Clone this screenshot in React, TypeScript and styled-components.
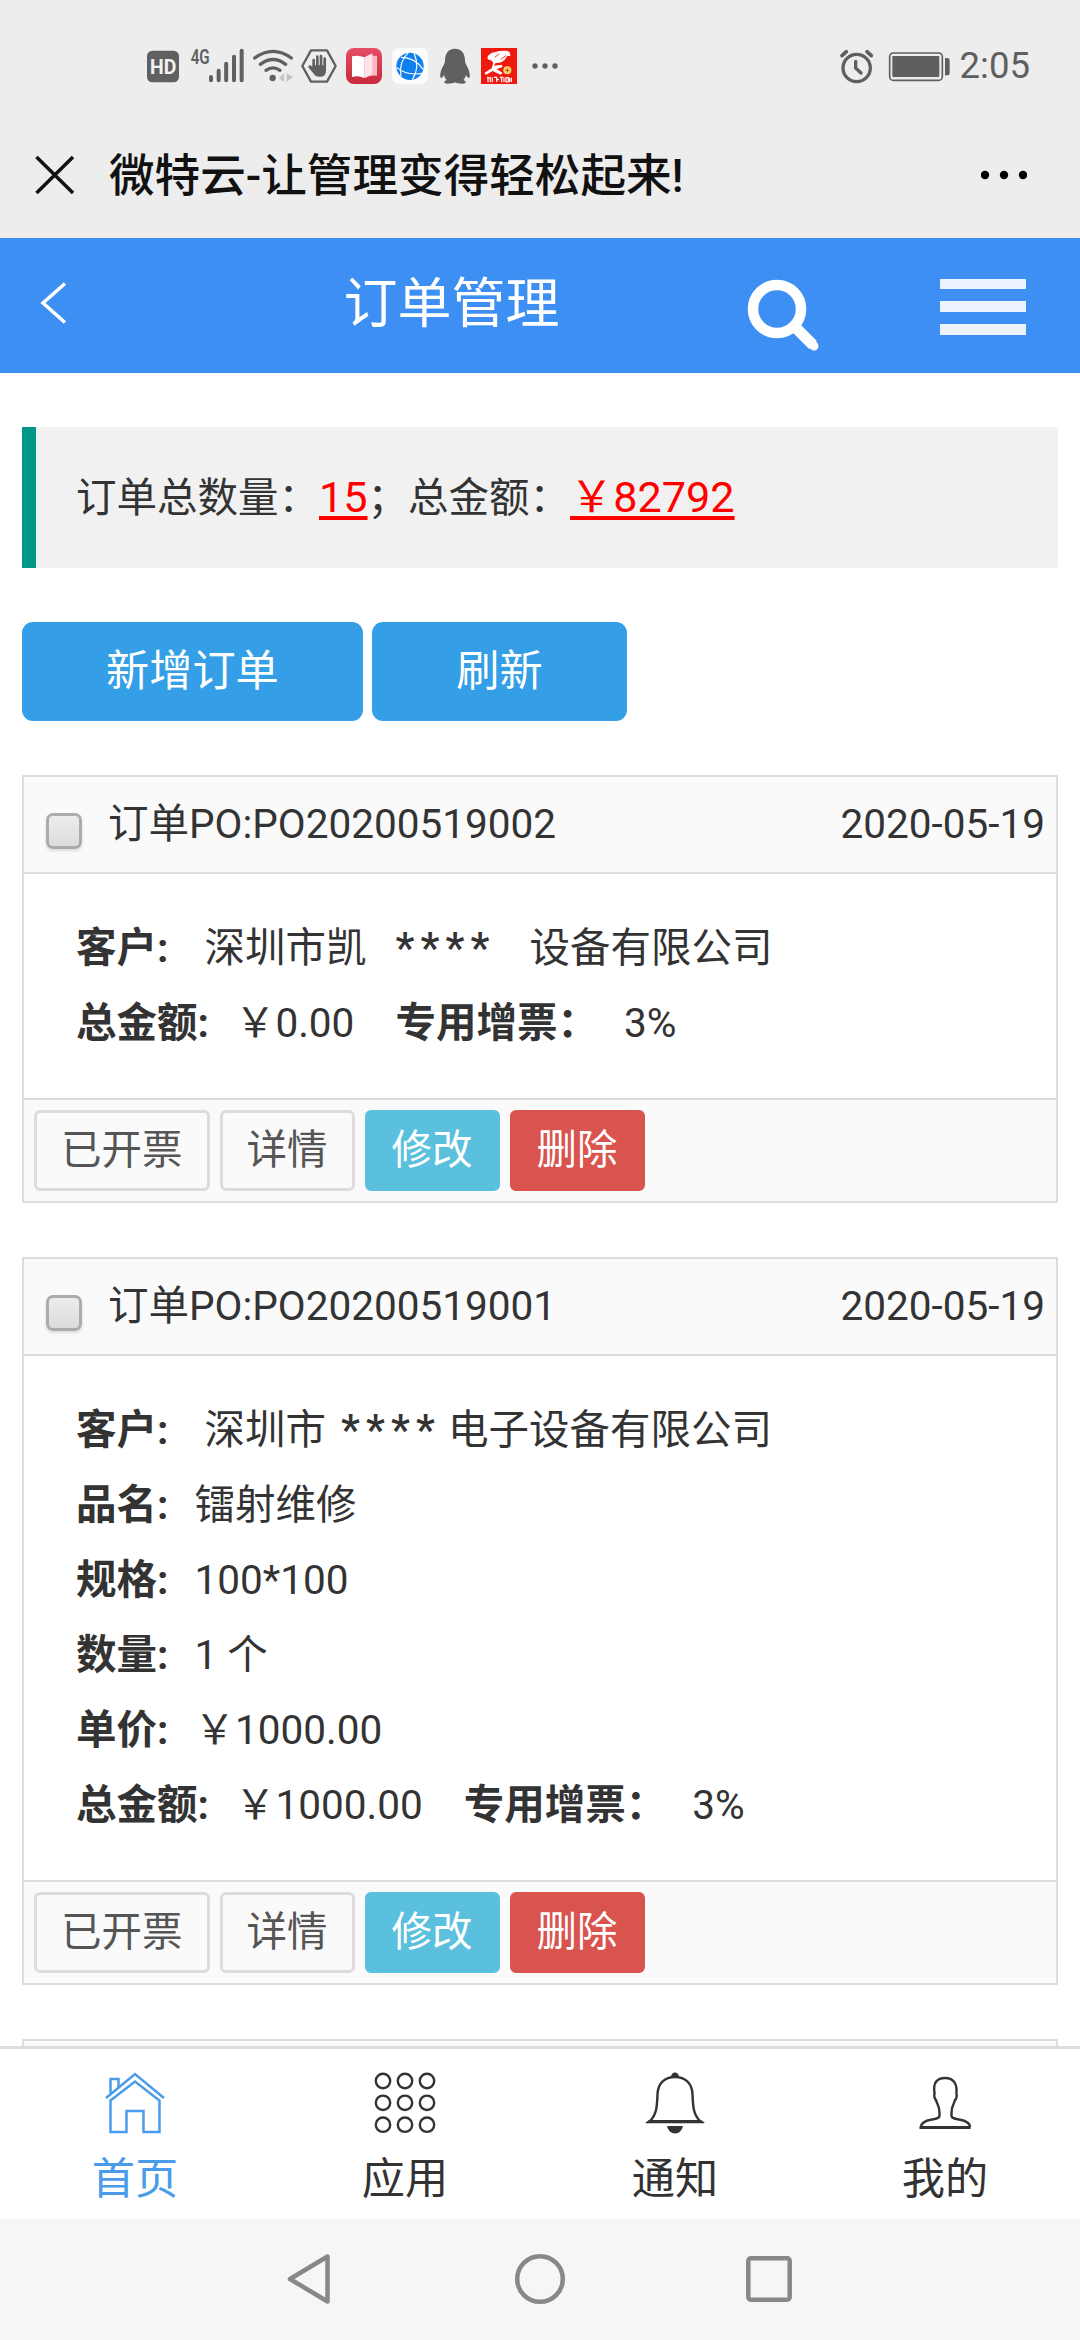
import React from 'react';
import styled, { createGlobalStyle, css } from 'styled-components';

const GlobalStyle = createGlobalStyle`
  * { box-sizing: border-box; }
  body {
    margin: 0;
    background: #fff;
    font-family: Roboto, "Noto Sans CJK SC", sans-serif;
    color: #333;
  }
  svg { display: block; flex: none; }
`;

const Screen = styled.div`
  width: 1080px;
  height: 2340px;
  display: flex;
  flex-direction: column;
  overflow: hidden;
`;

/* ---------- system status bar ---------- */

const StatusBar = styled.div`
  height: 112px;
  flex: none;
  padding: 20px 50px 0 147px;
  background: #ededed;
  color: #5f5f5f;
  display: flex;
  align-items: center;
  justify-content: space-between;
`;

const StatusGroup = styled.div`
  display: flex;
  align-items: center;
`;

const Glyph = styled.svg<{ $gap?: number }>`
  height: 36px;
  margin-left: ${(p) => p.$gap ?? 0}px;
  overflow: visible;
`;

const Clock = styled.span`
  margin-left: 10px;
  font-size: 36.5px;
  line-height: 38px;
`;

/* ---------- title bar of the host app ---------- */

const TitleBar = styled.div`
  height: 126px;
  flex: none;
  padding: 0 53px 0 35px;
  background: #ededed;
  color: #111;
  display: flex;
  align-items: center;
`;

const PageTitle = styled.h1`
  flex: 1;
  margin: 4px 0 0 34px;
  font-size: 45.6px;
  line-height: 60px;
  font-weight: 500;
`;

/* ---------- blue header ---------- */

const Header = styled.header`
  height: 135px;
  flex: none;
  background: #3e8ff3;
  color: #fff;
  display: grid;
  grid-template-columns: 180px 543px 1fr 140px;
  align-items: center;
`;

const HeaderTitle = styled.h2`
  margin: 0 0 2px;
  font-size: 54px;
  line-height: 70px;
  font-weight: 400;
  text-align: center;
`;

const BackCell = styled.div`
  padding: 0 0 5px 39px;
`;

const SearchCell = styled.div`
  padding: 18px 0 0 23px;
`;

const MenuBars = styled.div`
  padding-top: 2px;
  display: grid;
  grid-template-rows: 10px 11px 11px;
  row-gap: 12px;
  width: 86px;
`;

const Bar = styled.span`
  background: #edf3fc;
`;

/* ---------- content ---------- */

const Main = styled.main`
  flex: 1;
  min-height: 0;
  overflow: hidden;
  padding: 54px 22px 0;
  display: flex;
  flex-direction: column;
  gap: 54px;
  font-size: 40.5px;
`;

const Summary = styled.section`
  height: 141px;
  flex: none;
  padding-left: 40px;
  border-left: 14px solid #009688;
  border-radius: 0 3px 3px 0;
  background: #f1f1f1;
  line-height: 141px;
  white-space: nowrap;
`;

const Figure = styled.span`
  font-size: 43.2px;
  color: #f00;
  text-decoration: underline;
  text-decoration-thickness: 4px;
  text-underline-offset: 4px;
  text-decoration-skip-ink: none;
`;

const Toolbar = styled.div`
  display: flex;
  gap: 9.6px;
  flex: none;
`;

const PrimaryButton = styled.button`
  height: 99px;
  padding: 0 84px;
  border: 0;
  border-radius: 11px;
  background: #349fe6;
  color: #fff;
  font: 400 43.2px/97px Roboto, "Noto Sans CJK SC", sans-serif;
`;

const Card = styled.article`
  flex: none;
  border: 2px solid #dcdcdc;
`;

const CardHead = styled.div`
  height: 97px;
  padding: 0 11px 0 22px;
  border-bottom: 2px solid #dcdcdc;
  background: #fafafa;
  display: flex;
  align-items: center;
  line-height: 95px;
`;

const Check = styled.input`
  appearance: none;
  width: 36px;
  height: 36px;
  margin: 13px 26px 0 0;
  border: 3px solid #acacac;
  border-radius: 7px;
  background: linear-gradient(#ececec, #dcdcdc);
  box-shadow: 0 2px 3px rgba(0, 0, 0, 0.12);
`;

const OrderDate = styled.span`
  margin-left: auto;
`;

const CardBody = styled.div`
  padding: 37px 52px;
`;

const Line = styled.div`
  height: 75px;
  line-height: 74px;
  white-space: nowrap;
  display: flex;
`;

const Label = styled.b`
  font-weight: 700;
`;

const Value = styled.span<{ $gap?: number }>`
  margin: 0 41px 0 ${(p) => p.$gap ?? 26}px;
`;

const Mask = styled.span<{ $before: number; $after: number }>`
  display: inline-block;
  width: 100px;
  margin: 0 ${(p) => p.$after}px 0 ${(p) => p.$before}px;
  font-size: 42px;
  font-weight: 600;
  letter-spacing: 6.2px;
`;

const CardFoot = styled.div`
  padding: 10px;
  border-top: 2px solid #dcdcdc;
  background: #fafafa;
  display: flex;
  gap: 10px;
`;

const tones = {
  plain: css`
    background: #fafafa;
    border-color: #dcdcdc;
    color: #555;
  `,
  info: css`
    background: #5bc0de;
    border-color: #5bc0de;
    color: #fff;
  `,
  danger: css`
    background: #d9534f;
    border-color: #d9534f;
    color: #fff;
  `,
};

const ActionButton = styled.button<{ $tone: keyof typeof tones }>`
  height: 81px;
  padding: 0 24px;
  border: 3px solid;
  border-radius: 6px;
  font: 400 40.5px/73px Roboto, "Noto Sans CJK SC", sans-serif;
  ${(p) => tones[p.$tone]}
`;

/* ---------- bottom tabs and system navigation ---------- */

const TabBar = styled.nav`
  height: 173px;
  flex: none;
  border-top: 3px solid #dcdcdc;
  background: #fff;
  display: grid;
  grid-template-columns: repeat(4, 1fr);
`;

const Tab = styled.div<{ $active?: boolean }>`
  padding-top: 22px;
  display: flex;
  flex-direction: column;
  align-items: center;
  color: ${(p) => (p.$active ? '#4a9cea' : '#333')};
`;

const TabLabel = styled.span`
  margin-top: 20px;
  font-size: 43.2px;
  line-height: 50px;
`;

const SystemNav = styled.div`
  height: 121px;
  flex: none;
  padding: 0 0 1px 285.5px;
  background: #f6f6f6;
  display: grid;
  grid-template-columns: 228.5px 231.5px auto;
  align-items: center;
`;

type Field = { label: string; value: React.ReactNode; gap?: number };
type Order = { po: string; date: string; lines: Field[][] };

const tax: Field = { label: '专用增票：', value: '3%', gap: 26 };

const orders: Order[] = [
  {
    po: 'PO20200519002',
    date: '2020-05-19',
    lines: [
      [{
        label: '客户:',
        gap: 36,
        value: <>深圳市凯<Mask $before={29} $after={34}>****</Mask>设备有限公司</>,
      }],
      [{ label: '总金额:', value: '￥0.00' }, tax],
    ],
  },
  {
    po: 'PO20200519001',
    date: '2020-05-19',
    lines: [
      [{
        label: '客户:',
        gap: 36,
        value: <>深圳市<Mask $before={15} $after={7}>****</Mask>电子设备有限公司</>,
      }],
      [{ label: '品名:', value: '镭射维修' }],
      [{ label: '规格:', value: '100*100' }],
      [{ label: '数量:', value: '1 个' }],
      [{ label: '单价:', value: '￥1000.00' }],
      [{ label: '总金额:', value: '￥1000.00' }, tax],
    ],
  },
];

const OrderCard = ({ order }: { order: Order }) => (
  <Card>
    <CardHead>
      <Check type="checkbox" />
      <span>订单PO:{order.po}</span>
      <OrderDate>{order.date}</OrderDate>
    </CardHead>
    <CardBody>
      {order.lines.map((fields, i) => (
        <Line key={i}>
          {fields.map((f) => (
            <React.Fragment key={f.label}>
              <Label>{f.label}</Label>
              <Value $gap={f.gap}>{f.value}</Value>
            </React.Fragment>
          ))}
        </Line>
      ))}
    </CardBody>
    <CardFoot>
      <ActionButton $tone="plain">已开票</ActionButton>
      <ActionButton $tone="plain">详情</ActionButton>
      <ActionButton $tone="info">修改</ActionButton>
      <ActionButton $tone="danger">删除</ActionButton>
    </CardFoot>
  </Card>
);

const StatusIcons = () => (
  <StatusGroup>
    <Glyph width="32" viewBox="52 54 96 108">
      <rect x="52" y="62" width="96" height="95" rx="16" fill="#606060" />
      <text x="61" y="132" fontSize="63" fontWeight="700" fill="#f2f2f2" textLength="79" lengthAdjust="spacingAndGlyphs">HD</text>
    </Glyph>
    <Glyph width="53" $gap={12} viewBox="183 54 159 108">
      <text x="182" y="102" fontSize="61" fontWeight="600" fill="#606060" textLength="57" lengthAdjust="spacingAndGlyphs">4G</text>
      <path d="M243 141v10M266 122v29M288.500 101v50M312 80v71M335 62v89" stroke="#606060" strokeWidth="12" strokeLinecap="round" />
    </Glyph>
    <Glyph width="40" $gap={9} viewBox="370 54 120 108">
      <g fill="none" stroke="#606060" strokeWidth="10" strokeLinecap="round">
        <path d="M375 84Q430 44 485 84" />
        <path d="M392 103Q430 74 468 103" />
        <path d="M409 121Q430 106 451 121" />
      </g>
      <circle cx="429" cy="144" r="9.500" fill="#606060" />
      <path d="M463 130v26l-15-12zM471 130v26l19-15z" fill="#c4c4c4" />
    </Glyph>
    <Glyph width="36" $gap={8} viewBox="513 54 108 108">
      <path d="M543 61h48l26 47-26 47h-48l-26-47z" fill="none" stroke="#606060" strokeWidth="7" strokeLinejoin="round" />
      <path d="M551 118V90M562 114V80M573 114V78M584 118V86" stroke="#606060" strokeWidth="8" strokeLinecap="round" />
      <path d="M547 106h41v16c0 11-6 18-16 18h-6c-8 0-12-4-16-10l-14-17c-3-5 3-9 7-6l10 8z" fill="#606060" />
    </Glyph>
    <Glyph width="36" $gap={9} viewBox="648 54 108 108">
      <defs>
        <linearGradient id="book" x1="0" y1="0" x2="0" y2="1">
          <stop offset="0" stopColor="#e64c66" />
          <stop offset="1" stopColor="#c62a3b" />
        </linearGradient>
      </defs>
      <rect x="648" y="54" width="108" height="108" rx="24" fill="url(#book)" />
      <path d="M666 79q20-5 37 3v62q-17-8-37-3z" fill="#fff" />
      <path d="M703 82q16-9 38-4v59q-20-3-38 7z" fill="#f7b7c4" />
      <path d="M703 82l24-12v62l-24 12z" fill="#fde3e8" />
    </Glyph>
    <Glyph width="36" $gap={10} viewBox="785 54 108 108">
      <rect x="785" y="54" width="108" height="108" rx="20" fill="#fbfbfb" />
      <circle cx="839" cy="109" r="41" fill="#0f7fee" />
      <g fill="none" stroke="#fff" strokeWidth="3.500">
        <path d="M812 82Q854 82 878 118" />
        <path d="M834 68Q804 96 812 140" />
        <path d="M799 112Q830 138 874 130" />
        <path d="M851 69Q870 112 846 149" />
      </g>
    </Glyph>
    <Glyph width="30" $gap={12} viewBox="930 54 90 108">
      <path d="M975 56c21 0 30 16 30 35 0 6 1 9 4 14 7 12 12 26 10 36-2 6-7 1-11-6-2 7-4 11-8 15 10 4 10 11-2 11-10 0-18-1-23-4-5 3-13 4-23 4-12 0-12-7-2-11-4-4-6-8-8-15-4 7-9 12-11 6-2-10 3-24 10-36 3-5 4-8 4-14 0-19 9-35 30-35z" fill="#606060" />
    </Glyph>
    <Glyph width="36" $gap={11} viewBox="1053 54 108 108">
      <rect x="1053" y="54" width="108" height="108" fill="#f0190f" />
      <path d="M1072 84q2-14 24-18 20-5 36-3 10 2 9 14l-10 2q-5 12-16 17-8 4-18 3l-6 8 24-3 3 7-18 6 18 12-6 5-24-11-20 11-5-5 22-14 5-16q-4-6-7-8-9 0-11-7z" fill="#fff" />
      <path d="M1094 82l14-10M1112 88l17-12" stroke="#f0190f" strokeWidth="2.500" />
      <circle cx="1132" cy="121" r="12" fill="#f9d56a" />
      <path d="M1132 115v12M1126 121h12" stroke="#a05a10" strokeWidth="3" />
      <path d="M1071 144h11M1074 140v17M1081 141v16M1087 142v15M1092 142h8v14M1102 149h5M1109 142h11M1115 142v15M1122 143v13M1128 143h7v13h-7zM1139 143v13M1144 143v13" stroke="#fff" strokeWidth="3.500" fill="none" />
    </Glyph>
    <Glyph width="26" $gap={14.500} viewBox="1204 54 78 108">
      <g fill="#606060">
        <circle cx="1213" cy="108" r="8" />
        <circle cx="1243" cy="108" r="8" />
        <circle cx="1273" cy="108" r="8" />
      </g>
    </Glyph>
  </StatusGroup>
);

const AlarmAndBattery = () => (
  <StatusGroup>
    <Glyph width="33" viewBox="60 54 99 108">
      <g fill="none" stroke="#5f5f5f" strokeLinecap="round">
        <circle cx="110" cy="114" r="41" strokeWidth="10" />
        <path d="M107 94v20l16 15" strokeWidth="10" />
        <path d="M66 77l13-12M141 65l13 12" strokeWidth="11" />
      </g>
    </Glyph>
    <Glyph width="61" $gap={16} viewBox="207 54 183 108">
      <rect x="209" y="69" width="158" height="82" rx="11" fill="none" stroke="#5f5f5f" strokeWidth="5" />
      <rect x="217" y="78" width="141" height="63" rx="3" fill="#5f5f5f" />
      <path d="M375 84h6q8 0 8 8v36q0 8-8 8h-6z" fill="#5f5f5f" />
    </Glyph>
    <Clock>2:05</Clock>
  </StatusGroup>
);

const App = () => (
  <Screen>
    <GlobalStyle />
    <StatusBar>
      <StatusIcons />
      <AlarmAndBattery />
    </StatusBar>

    <TitleBar>
      <svg width="40" height="40" viewBox="0 0 40 40">
        <path d="M1.500 2L38 38M38 2L1.500 38" stroke="#111" strokeWidth="3.500" />
      </svg>
      <PageTitle>微特云-让管理变得轻松起来!</PageTitle>
      <svg width="46" height="10" viewBox="0 0 46 10">
        <circle cx="4" cy="5" r="4.200" />
        <circle cx="23" cy="5" r="4.200" />
        <circle cx="42" cy="5" r="4.200" />
      </svg>
    </TitleBar>

    <Header>
      <BackCell>
        <svg width="30" height="42" viewBox="0 0 30 42">
          <path d="M26 1.500L4 21l22 19.500" fill="none" stroke="#fff" strokeWidth="3.500" />
        </svg>
      </BackCell>
      <HeaderTitle>订单管理</HeaderTitle>
      <SearchCell>
        <svg width="74" height="74" viewBox="0 0 74 74">
          <circle cx="31" cy="31" r="24" fill="none" stroke="#fff" strokeWidth="10.500" />
          <path d="M50 50l17 17" stroke="#fff" strokeWidth="11" />
          <path d="M66 66l2 2" stroke="#fff" strokeWidth="9" strokeLinecap="round" />
        </svg>
      </SearchCell>
      <MenuBars>
        <Bar />
        <Bar />
        <Bar />
      </MenuBars>
    </Header>

    <Main>
      <Summary>
        订单总数量：<Figure>15</Figure>；总金额：<Figure>￥82792</Figure>
      </Summary>
      <Toolbar>
        <PrimaryButton>新增订单</PrimaryButton>
        <PrimaryButton>刷新</PrimaryButton>
      </Toolbar>
      {orders.map((o) => (
        <OrderCard key={o.po} order={o} />
      ))}
      <Card>
        <CardHead />
      </Card>
    </Main>

    <TabBar>
      <Tab $active>
        <svg width="62" height="64" viewBox="0 0 62 64" fill="none" stroke="currentColor" strokeWidth="2.500">
          <path d="M2 27L31 3l29 24" />
          <path d="M6.500 22V8h8v8" />
          <path d="M6.500 29.500L31 10.500l24.500 19V61H39.500V40h-17v21h-16z" />
        </svg>
        <TabLabel>首页</TabLabel>
      </Tab>
      <Tab>
        <svg width="62" height="64" viewBox="0 0 62 64" fill="none" stroke="currentColor" strokeWidth="2.400">
          {[10, 31.8, 53.700].map((cy) =>
            [9, 31, 53].map((cx) => <circle key={`${cx}-${cy}`} cx={cx} cy={cy} r="7.200" />),
          )}
        </svg>
        <TabLabel>应用</TabLabel>
      </Tab>
      <Tab>
        <svg width="62" height="64" viewBox="0 0 62 64" fill="none" stroke="currentColor" strokeWidth="2.400">
          <path d="M5 51c8-7 8-16 8.500-28C14 12 21 6 31 6s17 6 17.500 17c.5 12 .5 21 8.500 28z" />
          <path d="M27 6a4 4.500 0 018 0zM1 52h60l-4-3H5z" fill="currentColor" stroke="none" />
          <path d="M23 55h16c-1 4.500-4 7.500-8 7.500s-7-3-8-7.500z" fill="currentColor" stroke="none" />
        </svg>
        <TabLabel>通知</TabLabel>
      </Tab>
      <Tab>
        <svg width="62" height="64" viewBox="0 0 62 64" fill="none" stroke="currentColor" strokeWidth="2.400">
          <path d="M7 56c0-4 5-6.500 11-7.500 5-1 7.500-1.500 7.500-3.500 0-6 .5-7-2-12-.7-1.500-1.200-2.500-1.500-4-1.500-1-2.200-5-1.400-6.500C18.600 12 23 7 31 7s12.400 5 11.400 15.500c.8 1.500.1 5.500-1.400 6.500-.3 1.500-.8 2.500-1.500 4-2.500 5-2 6-2 12 0 2 2.500 2.500 7.500 3.500 6 1 11 3.500 11 7.500" />
          <path d="M5.500 56.500h51" strokeWidth="3" />
        </svg>
        <TabLabel>我的</TabLabel>
      </Tab>
    </TabBar>

    <SystemNav>
      <svg width="46" height="52" viewBox="0 0 46 52" fill="none" stroke="#888" strokeWidth="4.500" strokeLinejoin="round">
        <path d="M41.500 3.500v45L4 26z" />
      </svg>
      <svg width="52" height="52" viewBox="0 0 52 52" fill="none" stroke="#888" strokeWidth="4.500">
        <circle cx="26" cy="26" r="22.800" />
      </svg>
      <svg width="46" height="46" viewBox="0 0 46 46" fill="none" stroke="#888" strokeWidth="4.500">
        <rect x="2.300" y="2.300" width="41.400" height="41.400" rx="2.500" />
      </svg>
    </SystemNav>
  </Screen>
);

export default App;
